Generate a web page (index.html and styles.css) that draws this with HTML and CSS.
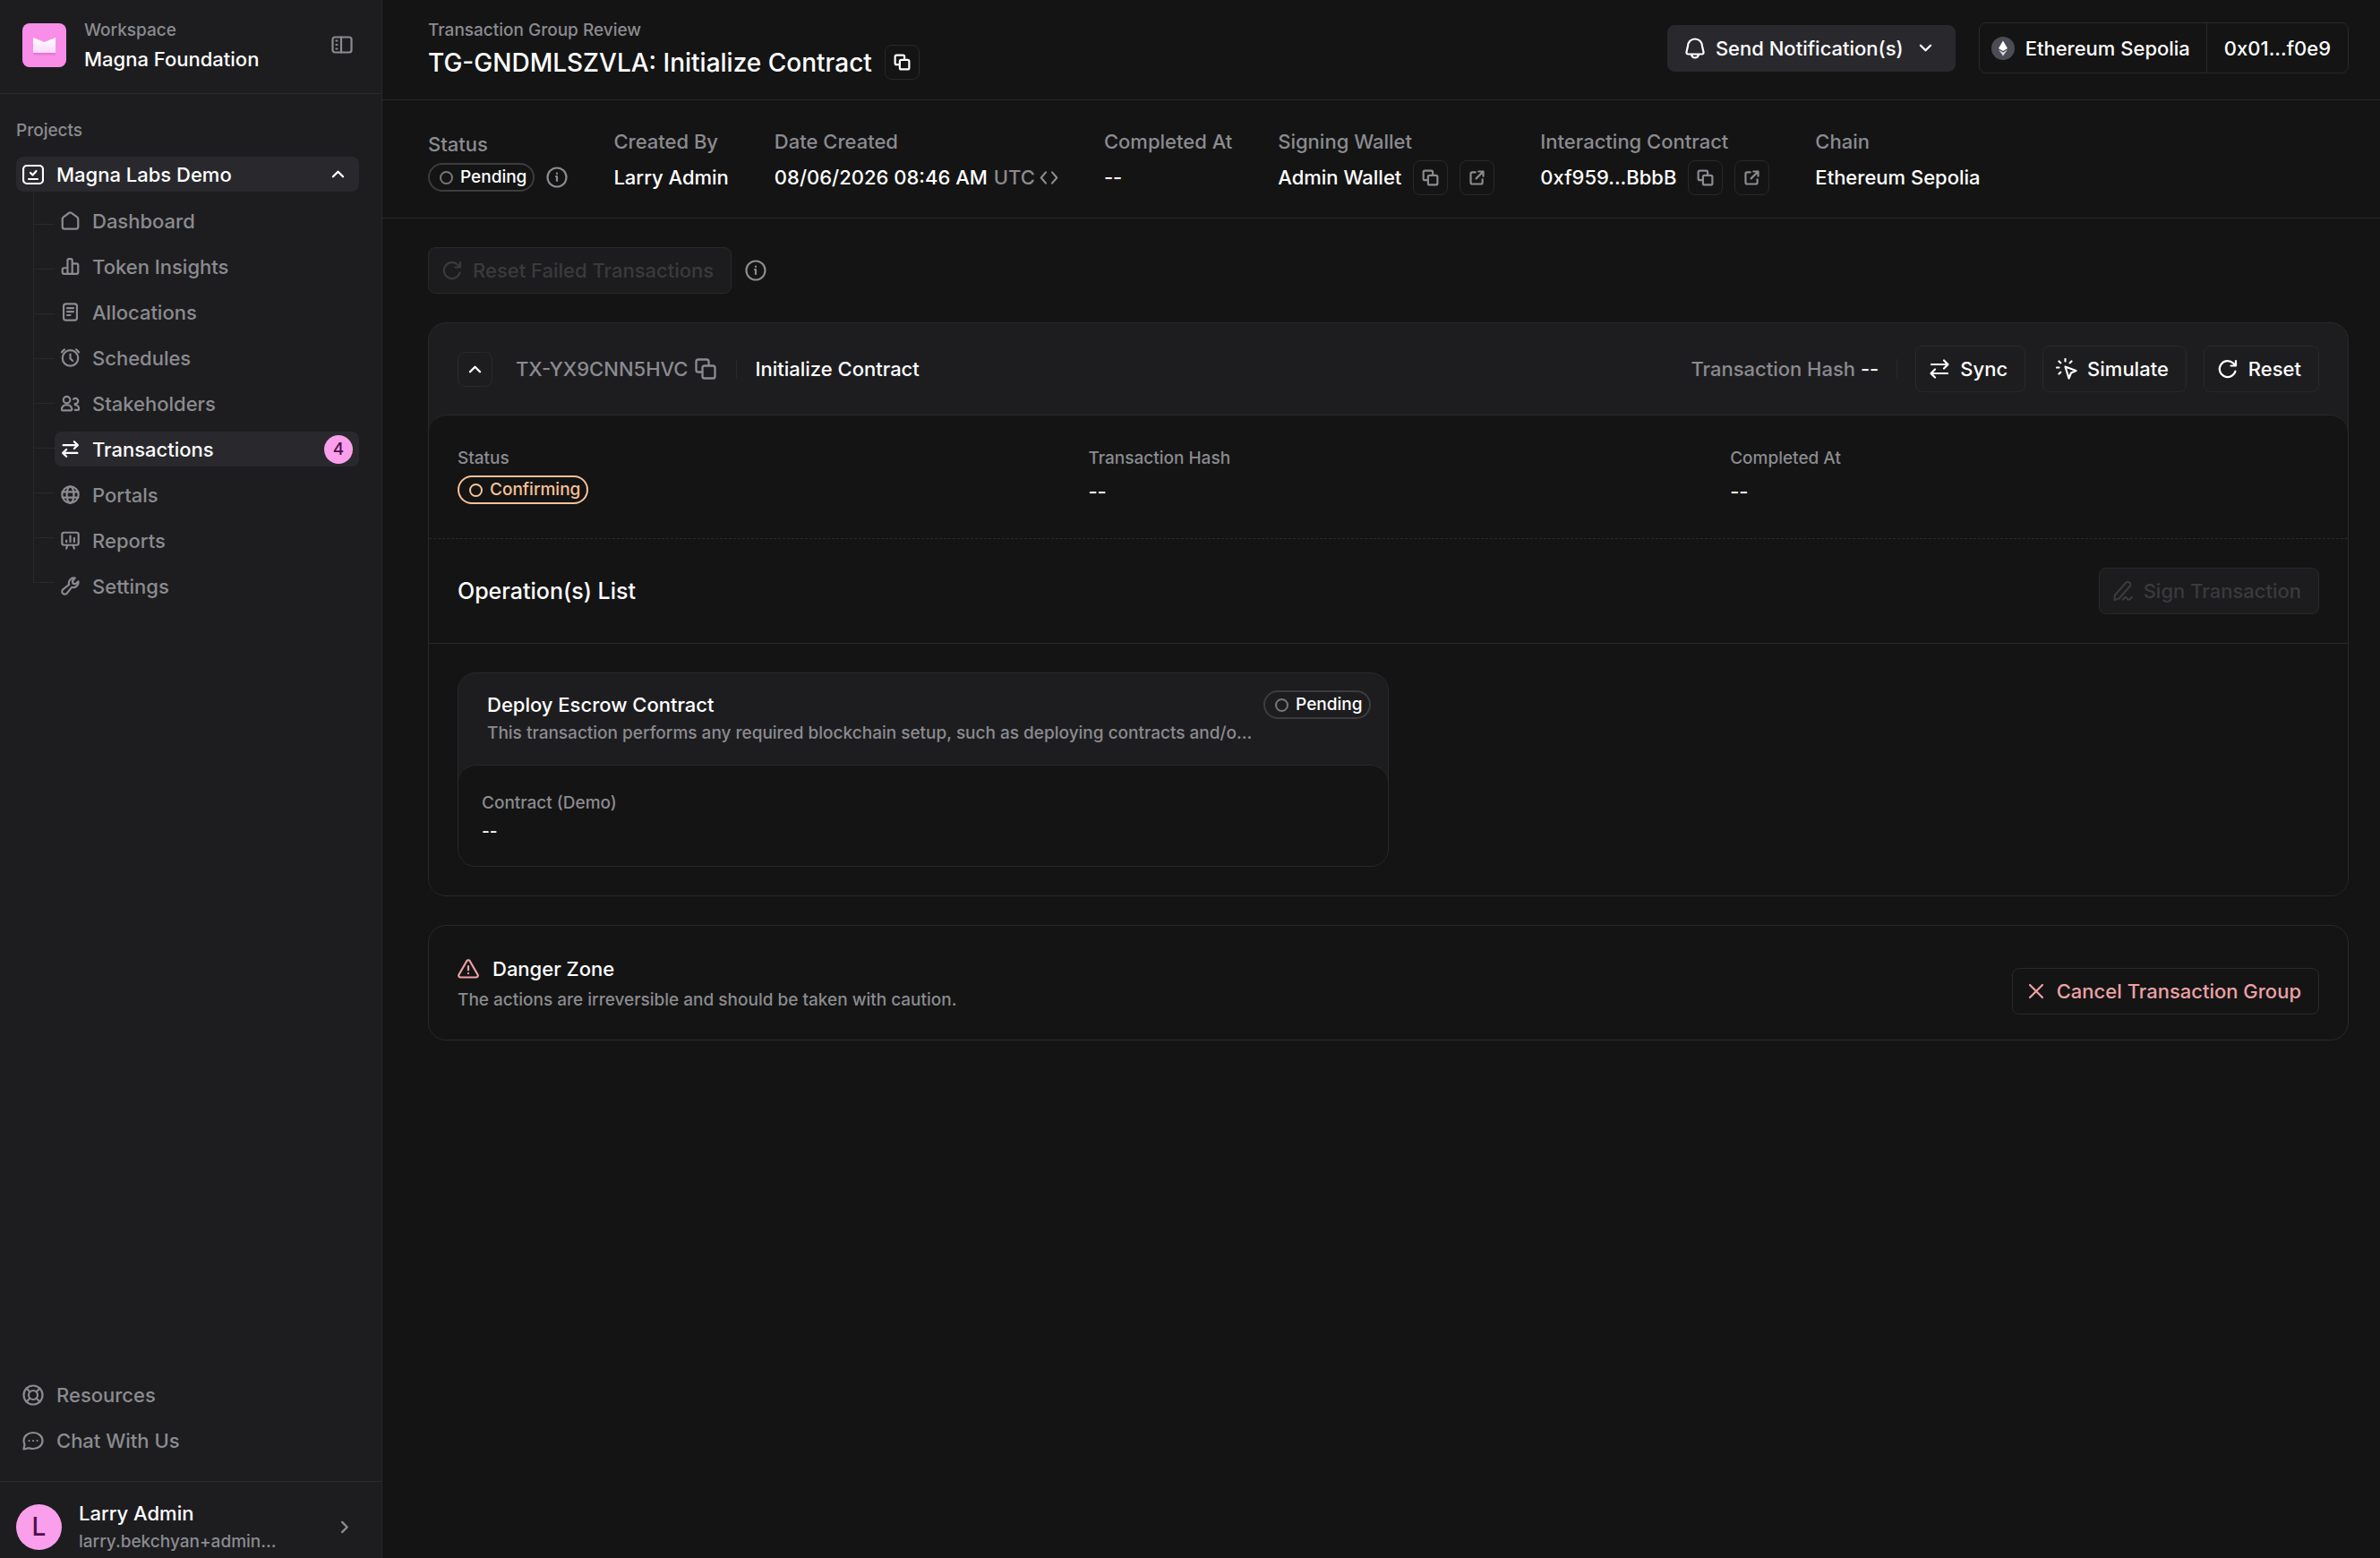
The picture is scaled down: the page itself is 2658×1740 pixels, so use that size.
FILE: index.html
```html
<!DOCTYPE html>
<html lang="en">
<head>
    <meta charset="UTF-8">
    <meta name="viewport" content="width=device-width, initial-scale=1.0">
    <title>Transaction Group Review</title>
    <link rel="stylesheet" href="styles.css">
</head>
<body>

    <!-- Shared icons -->
    <svg class="sprite" aria-hidden="true">
        <symbol id="i-copy" viewBox="0 0 24 24"><path d="M8 15H5a2 2 0 0 1-2-2V5a2 2 0 0 1 2-2h8a2 2 0 0 1 2 2v3"/><rect x="9" y="9" width="12" height="12" rx="2"/></symbol>
        <symbol id="i-external" viewBox="0 0 24 24"><path d="M10 5H6a2 2 0 0 0-2 2v11a2 2 0 0 0 2 2h11a2 2 0 0 0 2-2v-4M14 4h6v6M20 4l-9 9"/></symbol>
        <symbol id="i-info" viewBox="0 0 24 24"><circle cx="12" cy="12" r="10.500"/><path d="M11 11h1v5M12 7.500v.5"/></symbol>
        <symbol id="i-reset" viewBox="0 0 24 24"><path d="M20.500 14.500A9 9 0 1 1 18 5.500L20.500 8M21 3v5.500h-5.500"/></symbol>
        <symbol id="i-swap" viewBox="0 0 24 24"><path d="M3 7h18M17 2.500L21.500 7 17 11.500M21 17H3M7 12.500L2.500 17 7 21.500"/></symbol>
        <symbol id="i-up" viewBox="0 0 24 24"><path d="M5 15.500l7-7 7 7"/></symbol>
    </svg>

    <div class="app">
        <aside class="sidebar">
            <div class="workspace">
                <svg class="workspace-logo" viewBox="0 0 49 49">
                    <defs>
                        <linearGradient id="logo-shade" x1="0" y1="0" x2="0" y2="1">
                            <stop offset="0" stop-color="#fff"/>
                            <stop offset="0.550" stop-color="#fdeafd"/>
                            <stop offset="1" stop-color="#fbd7fa"/>
                        </linearGradient>
                        <linearGradient id="logo-drop" x1="0" y1="0" x2="0" y2="1">
                            <stop offset="0" stop-color="#d869cc"/>
                            <stop offset="1" stop-color="#f98ee8"/>
                        </linearGradient>
                    </defs>
                    <rect width="49" height="49" rx="8" fill="#f98ee8"/>
                    <path d="M12 32h25v5H12z" fill="url(#logo-drop)"/>
                    <path d="M12 16l12.500 5L37 16v17H12z" fill="url(#logo-shade)"/>
                </svg>
                <div class="workspace-text">
                    <span class="small muted">Workspace</span>
                    <span>Magna Foundation</span>
                </div>
                <button class="bare" aria-label="Collapse sidebar">
                    <svg class="icon" viewBox="0 0 24 24"><rect x="1.500" y="3.500" width="21" height="17" rx="2.500"/><path d="M11 3.500v17M5.500 7.500h1M5.500 12h1M5.500 16.500h1"/></svg>
                </button>
            </div>

            <nav class="projects">
                <span class="small muted projects-title">Projects</span>
                <button class="project">
                    <svg class="icon" viewBox="0 0 24 24"><rect x="1" y="2" width="22" height="20" rx="4"/><path d="M9 10l2.500 2.500 4-4.500M7 17h10"/></svg>
                    <span>Magna Labs Demo</span>
                    <svg class="icon icon-sm"><use href="#i-up"/></svg>
                </button>
                <div class="project-body">
                    <div class="tree">
                        <i></i><i></i><i></i><i></i><i></i><i></i><i></i><i></i><i></i>
                    </div>
                    <ul class="menu">
                        <li><a href="#">
                            <svg class="icon icon-md" viewBox="0 0 24 24"><path d="M2 9.500a2.500 2.500 0 0 1 1-2l7.500-5.500a2.500 2.500 0 0 1 3 0L21 7.500a2.500 2.500 0 0 1 1 2V20a2.500 2.500 0 0 1-2.500 2.500h-15A2.500 2.500 0 0 1 2 20z"/></svg>
                            Dashboard</a></li>
                        <li><a href="#">
                            <svg class="icon icon-md" viewBox="0 0 24 24"><path d="M8.500 21.500V4.500a2 2 0 0 1 2-2h2a2 2 0 0 1 2 2v17M14.500 8.500H20a2 2 0 0 1 2 2v9a2 2 0 0 1-2 2H4a2 2 0 0 1-2-2V16a2 2 0 0 1 2-2h4.500"/></svg>
                            Token Insights</a></li>
                        <li><a href="#">
                            <svg class="icon icon-md" viewBox="0 0 24 24"><rect x="3.500" y="1.500" width="17" height="21" rx="3"/><path d="M8 7h8M8 11.500h8M8 16h4"/></svg>
                            Allocations</a></li>
                        <li><a href="#">
                            <svg class="icon icon-md" viewBox="0 0 24 24"><circle cx="12" cy="12.500" r="10"/><path d="M12 7.500v5.500l3 3M1 5l3.500-3.500M23 5l-3.500-3.500"/></svg>
                            Schedules</a></li>
                        <li><a href="#">
                            <svg class="icon icon-md" viewBox="0 0 24 24"><circle cx="7.500" cy="7.500" r="4.300"/><path d="M7.500 14c-3.500 0-6 2-6.500 5a1.500 1.500 0 0 0 1.500 2h10a1.500 1.500 0 0 0 1.500-2c-.5-3-3-5-6.500-5zM16 6.500a3.500 3.500 0 1 1 2 6M18 14c3 0 5 2.500 5 5 0 1-.5 1.500-1.500 1.500H18"/></svg>
                            Stakeholders</a></li>
                        <li><a href="#" class="active">
                            <svg class="icon icon-md"><use href="#i-swap"/></svg>
                            Transactions<span class="count">4</span></a></li>
                        <li><a href="#">
                            <svg class="icon icon-md" viewBox="0 0 24 24"><circle cx="12" cy="12" r="10.500"/><ellipse cx="12" cy="12" rx="4.500" ry="10.500"/><path d="M2 8.500h20M2 15.500h20"/></svg>
                            Portals</a></li>
                        <li><a href="#">
                            <svg class="icon icon-md" viewBox="0 0 24 24"><rect x="1.500" y="2" width="21" height="16" rx="2.500"/><path d="M7 12v2M12 6.500V14M17 9v5M8.500 18L7 22.500M15.500 18l1.500 4.500"/></svg>
                            Reports</a></li>
                        <li><a href="#">
                            <svg class="icon icon-md" viewBox="0 0 24 24"><path d="M18 1.800a6.500 6.500 0 0 0-7.500 8.400L2.500 16.500a3.500 3.500 0 1 0 5 5l6.300-8a6.500 6.500 0 0 0 8.400-7.500L18.500 9.500l-3-.8-.8-3z"/></svg>
                            Settings</a></li>
                    </ul>
                </div>
            </nav>

            <div class="help">
                <a href="#">
                    <svg class="icon" viewBox="0 0 24 24"><circle cx="12" cy="12" r="10.500"/><circle cx="12" cy="12" r="5"/><path d="M4.500 4.500l4 4M19.500 4.500l-4 4M4.500 19.500l4-4M19.500 19.500l-4-4"/></svg>
                    Resources</a>
                <a href="#">
                    <svg class="icon" viewBox="0 0 24 24"><path d="M1.500 21.500l1-5.500A8.500 8.500 0 0 1 1.500 12c0-5 4.500-9 10.500-9s10.500 4 10.500 9-4.500 9-10.500 9c-1.500 0-3-.3-4.500-.8z"/><path d="M7.500 12h.1M12 12h.1M16.500 12h.1"/></svg>
                    Chat With Us</a>
            </div>

            <button class="user">
                <span class="avatar">L</span>
                <span class="user-text">
                    <span>Larry Admin</span>
                    <span class="small muted">larry.bekchyan+admin...</span>
                </span>
                <svg class="icon icon-sm muted" viewBox="0 0 24 24"><path d="M9 5l7 7-7 7"/></svg>
            </button>
        </aside>

        <main class="main">
            <header class="topbar">
                <div class="heading">
                    <span class="small muted">Transaction Group Review</span>
                    <div class="heading-row">
                        <h1>TG-GNDMLSZVLA: Initialize Contract</h1>
                        <button class="square" aria-label="Copy group id"><svg class="icon icon-md"><use href="#i-copy"/></svg></button>
                    </div>
                </div>
                <button class="btn btn-solid">
                    <svg class="icon" viewBox="0 0 24 24"><path d="M12 1.500a8 8 0 0 0-8 8L2.500 16c-.3 1.500.5 2.500 2 2.500h15c1.500 0 2.300-1 2-2.500L20 9.500a8 8 0 0 0-8-8zM8 19c.5 2 2 3.500 4 3.500s3.500-1.500 4-3.500"/></svg>
                    Send Notification(s)
                    <svg class="icon icon-sm chevron" viewBox="0 0 24 24"><path d="M5 8.500l7 7 7-7"/></svg>
                </button>
                <div class="account">
                    <button>
                        <svg class="eth" viewBox="0 0 26 26"><circle cx="13" cy="13" r="13" fill="#4b4c54"/><path d="M13 4.500l5 8.500-5 3-5-3z" fill="#fff"/><path d="M8 14.500l5 3 5-3-5 7z" fill="#d5d5da"/></svg>
                        Ethereum Sepolia
                    </button>
                    <button>0x01...f0e9</button>
                </div>
            </header>

            <section class="meta">
                <div class="meta-item">
                    <span class="muted">Status</span>
                    <div class="meta-value meta-status">
                        <span class="badge"><i></i>Pending</span>
                        <svg class="icon muted"><use href="#i-info"/></svg>
                    </div>
                </div>
                <div class="meta-item">
                    <span class="muted">Created By</span>
                    <div class="meta-value">Larry Admin</div>
                </div>
                <div class="meta-item">
                    <span class="muted">Date Created</span>
                    <div class="meta-value date">08/06/2026 08:46 AM
                        <button class="bare utc">UTC<svg class="icon icon-md" viewBox="0 0 24 24"><path d="M8 5l-6 7 6 7M16 5l6 7-6 7"/></svg></button>
                    </div>
                </div>
                <div class="meta-item">
                    <span class="muted">Completed At</span>
                    <div class="meta-value">--</div>
                </div>
                <div class="meta-item">
                    <span class="muted">Signing Wallet</span>
                    <div class="meta-value">Admin Wallet
                        <button class="square muted" aria-label="Copy wallet"><svg class="icon icon-md"><use href="#i-copy"/></svg></button>
                        <button class="square muted" aria-label="Open wallet"><svg class="icon icon-md"><use href="#i-external"/></svg></button>
                    </div>
                </div>
                <div class="meta-item">
                    <span class="muted">Interacting Contract</span>
                    <div class="meta-value">0xf959...BbbB
                        <button class="square muted" aria-label="Copy contract"><svg class="icon icon-md"><use href="#i-copy"/></svg></button>
                        <button class="square muted" aria-label="Open contract"><svg class="icon icon-md"><use href="#i-external"/></svg></button>
                    </div>
                </div>
                <div class="meta-item">
                    <span class="muted">Chain</span>
                    <div class="meta-value">Ethereum Sepolia</div>
                </div>
            </section>

            <div class="content">
                <div class="toolbar">
                    <button class="btn btn-disabled" disabled>
                        <svg class="icon"><use href="#i-reset"/></svg>
                        Reset Failed Transactions
                    </button>
                    <svg class="icon muted"><use href="#i-info"/></svg>
                </div>

                <section class="card">
                    <div class="card-head">
                        <button class="square" aria-label="Collapse transaction"><svg class="icon icon-sm"><use href="#i-up"/></svg></button>
                        <div class="tx-id muted">TX-YX9CNN5HVC <svg class="icon icon-lg"><use href="#i-copy"/></svg></div>
                        <div class="divider"></div>
                        <h2>Initialize Contract</h2>
                        <div class="tx-hash"><span class="muted">Transaction Hash</span> --</div>
                        <div class="divider"></div>
                        <div class="actions">
                            <button class="btn"><svg class="icon"><use href="#i-swap"/></svg>Sync</button>
                            <button class="btn"><svg class="icon" viewBox="0 0 24 24"><path d="M10.500 9.500l12 4.500-5.500 2.500-2.500 6zM10.500 1v2.500M3.500 3.500l1.800 1.800M17.500 3.500l-1.800 1.800M1 10.500h2.500M3.500 17.500l1.800-1.800"/></svg>Simulate</button>
                            <button class="btn"><svg class="icon"><use href="#i-reset"/></svg>Reset</button>
                        </div>
                    </div>
                    <div class="card-body">
                        <div class="facts">
                            <div>
                                <span class="small muted">Status</span>
                                <span class="badge badge-warm"><i></i>Confirming</span>
                            </div>
                            <div>
                                <span class="small muted">Transaction Hash</span>
                                <span class="fact-value">--</span>
                            </div>
                            <div>
                                <span class="small muted">Completed At</span>
                                <span class="fact-value">--</span>
                            </div>
                        </div>
                        <div class="operations-head">
                            <h3>Operation(s) List</h3>
                            <button class="btn btn-disabled" disabled>
                                <svg class="icon" viewBox="0 0 24 24"><path d="M3 16.500L15 3a2.800 2.800 0 0 1 4.500 4L7.500 20.500 2.500 22zM12 21.500c2-3 3.500-3 4.500-1s3 1.500 5.500-1.500"/></svg>
                                Sign Transaction
                            </button>
                        </div>
                        <div class="operations">
                            <article class="operation">
                                <div class="operation-head">
                                    <div>
                                        <h4>Deploy Escrow Contract</h4>
                                        <p class="small muted">This transaction performs any required blockchain setup, such as deploying contracts and/o...</p>
                                    </div>
                                    <span class="badge"><i></i>Pending</span>
                                </div>
                                <div class="operation-body">
                                    <span class="small muted">Contract (Demo)</span>
                                    <span class="small">--</span>
                                </div>
                            </article>
                        </div>
                    </div>
                </section>

                <section class="danger">
                    <div>
                        <h2><svg class="icon" viewBox="0 0 24 24"><path d="M10.300 3.200a2 2 0 0 1 3.400 0L22.500 18.500a2 2 0 0 1-1.700 3H3.200a2 2 0 0 1-1.700-3zM12 9v4.500M12 17v.2"/></svg>Danger Zone</h2>
                        <p class="small muted">The actions are irreversible and should be taken with caution.</p>
                    </div>
                    <button class="btn btn-danger">
                        <svg class="icon" viewBox="0 0 24 24"><path d="M5 5l14 14M19 5L5 19"/></svg>
                        Cancel Transaction Group
                    </button>
                </section>
            </div>
        </main>
    </div>

</body>
</html>
```

FILE: styles.css
```css
/* General Styles */
* {
    box-sizing: border-box;
}

:root {
    --bg: #141414;
    --panel: #1d1d1f;
    --raised: #29292d;
    --line: #29292a;
    --muted: #8b8b90;
    --pink: #fa9fec;
}

body {
    font-family: Inter, "Liberation Sans", sans-serif;
    font-size: 22px;
    font-weight: 500;
    line-height: 32px;
    margin: 0;
    color: #fff;
    background-color: var(--bg);
}

h1, h2, h3, h4, p, ul {
    margin: 0;
    padding: 0;
    font-size: inherit;
    font-weight: 500;
}

ul { list-style: none; }
a { color: inherit; text-decoration: none; }

button {
    font: inherit;
    color: inherit;
    background: none;
    border: none;
    padding: 0;
    cursor: pointer;
}

.small { font-size: 19px; }
.muted { color: var(--muted); }

.sprite {
    position: absolute;
    width: 0;
    height: 0;
}

.icon {
    width: 24px;
    height: 24px;
    flex: none;
    fill: none;
    stroke: currentColor;
    stroke-width: 2.2;
    stroke-linecap: round;
    stroke-linejoin: round;
}

.icon-lg { width: 28px; height: 28px; stroke-width: 2; }
.icon-md { width: 21px; height: 21px; stroke-width: 2.5; }
.icon-sm { width: 19px; height: 19px; stroke-width: 3; }

.app {
    display: flex;
    min-height: 100vh;
}

/* Sidebar */
.sidebar {
    width: 427px;
    flex: none;
    display: flex;
    flex-direction: column;
    background-color: var(--panel);
    border-right: 1px solid var(--line);
}

.workspace {
    display: flex;
    align-items: center;
    height: 105px;
    padding: 0 32px 4px 25px;
    border-bottom: 1px solid var(--line);
}

.workspace-logo { width: 49px; height: 49px; }

.workspace-text {
    display: flex;
    flex-direction: column;
    flex: 1;
    margin-left: 20px;
}

.bare {
    display: flex;
    align-items: center;
    color: var(--muted);
}

.projects { padding: 25px 25px 0 18px; }

.projects-title { display: block; }

.project {
    display: flex;
    align-items: center;
    width: 100%;
    height: 39px;
    margin-top: 13px;
    padding: 0 14px 0 7px;
    gap: 14px;
    border-radius: 8px;
    background-color: var(--raised);
}

.project span { flex: 1; text-align: left; }

.project-body {
    display: flex;
    padding-left: 19px;
}

/* Branch lines beside the menu */
.tree {
    width: 24px;
    align-self: flex-start;
    border-left: 1px solid var(--line);
}

.tree i {
    display: block;
    height: 50px;
    border-bottom: 1px solid var(--line);
}

.tree i:first-child { height: 37px; }

.menu {
    flex: 1;
    display: flex;
    flex-direction: column;
    gap: 12px;
    padding-top: 13px;
}

.menu a {
    display: flex;
    align-items: center;
    height: 39px;
    padding: 0 7px;
    gap: 14px;
    border-radius: 8px;
    color: var(--muted);
}

.menu .active {
    color: #fff;
    background-color: var(--raised);
}

.count {
    width: 32px;
    height: 32px;
    margin-left: auto;
    border-radius: 50%;
    background-color: var(--pink);
    color: #4f0f4b;
    font-size: 19px;
    text-align: center;
}

.help {
    display: flex;
    flex-direction: column;
    gap: 19px;
    margin-top: auto;
    padding: 0 25px 29px;
    color: var(--muted);
}

.help a {
    display: flex;
    align-items: center;
    gap: 14px;
}

.user {
    display: flex;
    align-items: center;
    height: 86px;
    padding: 16px 32px 0 18px;
    border-top: 1px solid var(--line);
    text-align: left;
}

.avatar {
    width: 51px;
    height: 51px;
    border-radius: 50%;
    background-color: var(--pink);
    color: #4f0f4b;
    font-size: 28px;
    line-height: 51px;
    text-align: center;
}

.user-text {
    display: flex;
    flex-direction: column;
    flex: 1;
    margin-left: 19px;
}

/* Top bar */
.main {
    flex: 1;
    min-width: 0;
}

.topbar {
    display: flex;
    align-items: center;
    height: 112px;
    padding: 0 35px 0 51px;
    border-bottom: 1px solid var(--line);
}

.heading {
    flex: 1;
    padding-bottom: 4px;
}

.heading .small { display: block; }

.heading-row {
    display: flex;
    align-items: center;
    gap: 14px;
}

h1 { font-size: 28px; }

.square {
    display: flex;
    align-items: center;
    justify-content: center;
    width: 39px;
    height: 39px;
    flex: none;
    border: 1px solid var(--line);
    border-radius: 8px;
}

.btn {
    display: flex;
    align-items: center;
    gap: 11px;
    height: 52px;
    padding: 0 19px 0 14px;
    border: 1px solid var(--line);
    border-radius: 8px;
    white-space: nowrap;
}

.btn-solid {
    border-color: var(--raised);
    background-color: var(--raised);
    padding: 0 23px 0 18px;
    margin-bottom: 4px;
}

.btn-solid .chevron { margin-left: 4px; }

.btn-disabled {
    color: #3a3a3c;
    background-color: #1c1c1e;
    cursor: default;
}

.btn-danger { color: #eda1a5; }

.account {
    display: flex;
    height: 57px;
    margin: 0 0 4px 26px;
    border: 1px solid var(--line);
    border-radius: 8px;
}

.account button {
    display: flex;
    align-items: center;
    gap: 12px;
    padding: 0 18px 0 13px;
}

.account button + button {
    padding: 0 19px;
    border-left: 1px solid var(--line);
}

.eth { width: 26px; height: 26px; }

/* Group details */
.meta {
    display: flex;
    align-items: center;
    gap: 51px;
    height: 132px;
    padding: 4px 51px 0;
    border-bottom: 1px solid var(--line);
    white-space: nowrap;
}

.meta-item {
    display: flex;
    flex-direction: column;
    gap: 5px;
}

.meta-value {
    display: flex;
    align-items: center;
    gap: 13px;
    height: 39px;
}

.meta-status { height: 32px; }

.date { gap: 7px; }
.utc { gap: 5px; }

.badge {
    display: inline-flex;
    align-items: center;
    gap: 8px;
    height: 32px;
    padding: 0 7px 0 11px;
    border: 2px solid #3c3c3e;
    border-radius: 16px;
    font-size: 19px;
}

.badge i {
    width: 15px;
    height: 15px;
    border: 2px solid #77777b;
    border-radius: 50%;
}

.badge-warm, .badge-warm i {
    border-color: #f8c198;
    color: #f8c198;
}

/* Content */
.content { padding: 32px 35px 32px 51px; }

.toolbar {
    display: flex;
    align-items: center;
    gap: 15px;
}

.card {
    margin-top: 32px;
    border: 1px solid var(--line);
    border-radius: 20px;
    background-color: var(--panel);
    overflow: hidden;
}

.card-head {
    display: flex;
    align-items: center;
    height: 102px;
    padding: 0 32px;
}

.tx-id {
    display: flex;
    align-items: center;
    gap: 6px;
    margin-left: 26px;
}

.divider {
    width: 1px;
    height: 22px;
    margin: 0 20px;
    background-color: var(--line);
}

.tx-hash { margin-left: auto; }

.actions {
    display: flex;
    gap: 19px;
}

.card-body {
    border-top: 1px solid var(--line);
    border-radius: 20px 20px 0 0;
    background-color: var(--bg);
}

.facts {
    display: flex;
    gap: 24px;
    padding: 32px 32px 34px;
    border-bottom: 1px dashed var(--line);
}

.facts > div {
    display: flex;
    flex-direction: column;
    align-items: flex-start;
    gap: 3px;
    flex: 1 1 auto;
}

.fact-value { line-height: 36px; }

.operations-head {
    display: flex;
    align-items: center;
    justify-content: space-between;
    padding: 32px;
    border-bottom: 1px solid var(--line);
}

h3 { font-size: 25px; }

.operations { padding: 32px; }

.operation {
    width: 50%;
    border: 1px solid var(--line);
    border-radius: 20px;
    background-color: var(--panel);
    overflow: hidden;
}

.operation-head {
    display: flex;
    justify-content: space-between;
    height: 102px;
    padding: 19px 19px 0 32px;
}

.operation-head p { white-space: nowrap; }
.operation-head .badge { flex: none; }

.operation-body {
    display: flex;
    flex-direction: column;
    padding: 26px 26px 22px;
    border-top: 1px solid var(--line);
    border-radius: 20px 20px 0 0;
    background-color: var(--bg);
}

/* Danger zone */
.danger {
    display: flex;
    align-items: flex-end;
    justify-content: space-between;
    margin-top: 32px;
    padding: 32px 32px 28px;
    border: 1px solid var(--line);
    border-radius: 20px;
}

.danger h2 {
    display: flex;
    align-items: center;
    gap: 15px;
}

.danger h2 .icon { color: #eda1a5; }

.danger p { margin-top: 3px; }
```
